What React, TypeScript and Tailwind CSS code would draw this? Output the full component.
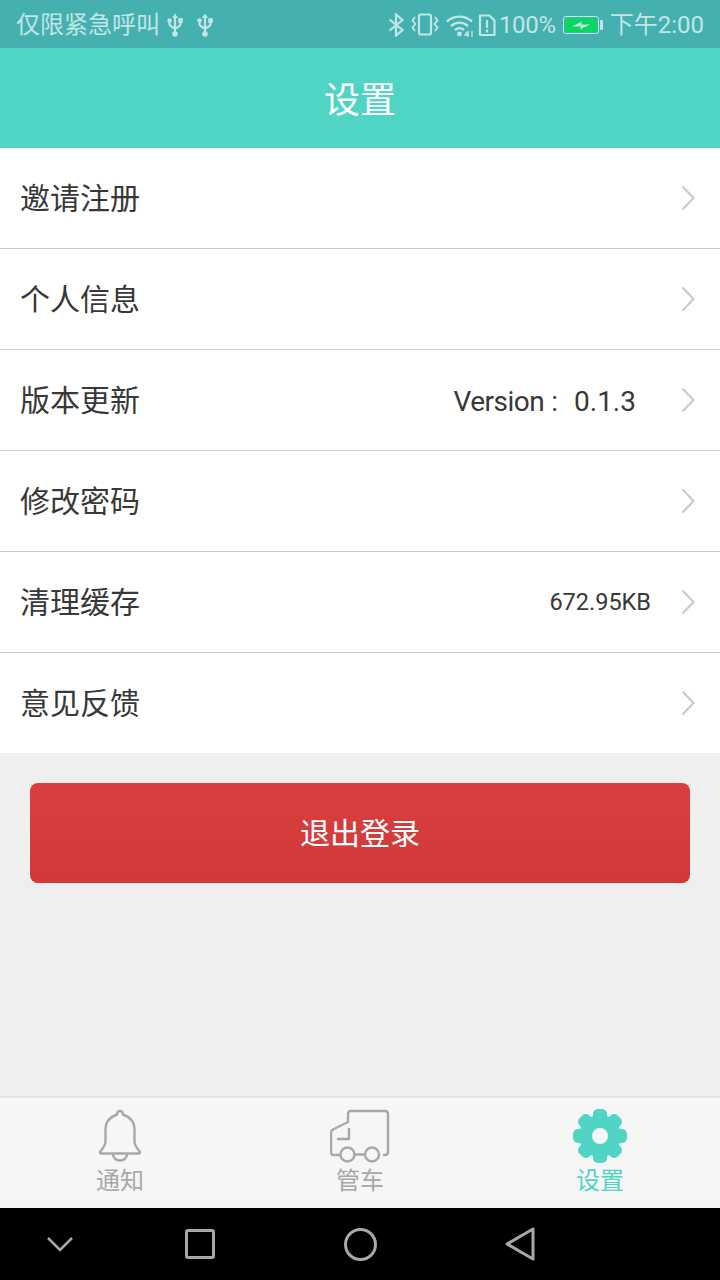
const FONT = "font-['Roboto','Noto_Sans_CJK_SC',sans-serif]";

const rows = [
  { label: "邀请注册" },
  { label: "个人信息" },
  { label: "版本更新", version: "0.1.3" },
  { label: "修改密码" },
  { label: "清理缓存", size: "672.95KB" },
  { label: "意见反馈" },
];

function UsbIcon() {
  return (
    <svg width="16" height="24" viewBox="0 0 16 24" fill="none" stroke="#c2e6e4" strokeWidth="2.200">
      <path d="M8 3v18M2.500 8v3c0 2 2 3 5.500 4.500 3.500-1.500 5.500-2.500 5.500-4.500V8" />
      <path d="M8 0.500l3 4.500H5z" fill="#c2e6e4" stroke="none" />
      <circle cx="2.500" cy="7.500" r="2.300" fill="#c2e6e4" stroke="none" />
      <rect x="11.200" y="5.200" width="4.600" height="4.600" fill="#c2e6e4" stroke="none" />
      <circle cx="8" cy="21" r="2.800" fill="#c2e6e4" stroke="none" />
    </svg>
  );
}

function StatusBar() {
  return (
    <div className="h-12 bg-[#45b0b0] flex items-center justify-between pl-4 pr-4 pt-[2px] text-[#c2e6e4] text-2xl">
      <div className="flex items-center">
        <span className="w-[143px] whitespace-nowrap">仅限紧急呼叫</span>
        <span className="ml-[8px] flex gap-[14px]">
          <UsbIcon />
          <UsbIcon />
        </span>
      </div>
      <div className="flex items-center">
        {/* bluetooth */}
        <svg width="16" height="24" viewBox="0 0 16 24" fill="none" stroke="#c2e6e4" strokeWidth="2.200" className="mr-[7px]">
          <path d="M1.500 6.500l13 10.500L8 22.500V1.500L14.500 7 1.500 17.500" />
        </svg>
        {/* vibrate */}
        <svg width="28" height="24" viewBox="0 0 28 24" fill="none" stroke="#c2e6e4" strokeWidth="2.200" className="mr-[7px]">
          <rect x="8" y="1.500" width="12" height="20" rx="2" />
          <path d="M4 4L1.500 7.500 4.500 11 1.500 14.500 4 18M24 4l2.500 3.500-3 3.500 3 3.500L24 18" strokeWidth="1.800" />
        </svg>
        {/* wifi */}
        <svg width="27" height="24" viewBox="0 0 27 24" fill="none" stroke="#c2e6e4" strokeWidth="2.400" className="mr-[5px]">
          <path d="M1 8.500c7-6.500 18-6.500 25 0M5 13c5-4.500 12-4.500 17 0M9 17c3-2.500 6-2.500 9 0" />
          <circle cx="13.500" cy="21" r="2.400" fill="#c2e6e4" stroke="none" />
          <path d="M21 19l-2 3h4M22 18v6M26 18v6" strokeWidth="1.400" />
        </svg>
        {/* sim alert */}
        <svg width="18" height="24" viewBox="0 0 18 24" fill="none" stroke="#c2e6e4" strokeWidth="2.200" className="mr-[3px]">
          <path d="M2 2.500h9.500l5 5v14.500H2z" strokeLinejoin="round" />
          <path d="M9 7v8M9 16.500v3" />
        </svg>
        <span className="text-[24px] tracking-[-0.3px] mr-[7px]">100%</span>
        {/* battery */}
        <svg width="40" height="22" viewBox="0 14 40 22" className="mr-[7px]">
          <rect x="0.500" y="16.500" width="35" height="17" rx="2" fill="none" stroke="#c2e6e4" />
          <rect x="2" y="18" width="32" height="14" fill="#0bd65f" />
          <path d="M9 26.500l10-5-1 3h9l-10 5 1-3z" fill="#c2e6e4" />
          <rect x="37" y="20" width="3" height="10" rx="1" fill="#c2e6e4" />
        </svg>
        <span className="whitespace-nowrap">下午2:00</span>
      </div>
    </div>
  );
}

function SettingRow({ label, version, size, last }: { label: string; version?: string; size?: string; last: boolean }) {
  return (
    <div className={`flex items-center pl-5 pr-[25px] bg-white ${last ? "h-[100px]" : "h-[101px] border-b border-[#c8c8c8]"}`}>
      <span className="text-[30px] text-[#383838] pt-[1px]">{label}</span>
      <div className="ml-auto flex items-center">
        {version && (
          <span className="flex text-[28px] text-[#383838] pt-1 mr-[45px]">
            <span className="tracking-[-0.5px]">Version</span>
            <span className="ml-[7px] mr-[16px]">:</span>
            <span>{version}</span>
          </span>
        )}
        {size && <span className="text-[23.5px] text-[#383838] pt-[2px] mr-[30px]">{size}</span>}
        <svg width="14" height="26" viewBox="0 0 14 26" fill="none" stroke="#c8c8c8" strokeWidth="2">
          <path d="M1.500 1.500L12.500 13 1.500 24.500" />
        </svg>
      </div>
    </div>
  );
}

function TabBar() {
  return (
    <div className="h-[112px] bg-[#f6f6f6] border-t-2 border-[#e3e3e3] flex">
      <div className="flex-1 flex flex-col items-center pt-[11px]">
        <svg width="44" height="54" viewBox="0 0 44 54" fill="none" stroke="#a8a8a8" strokeWidth="2.400" strokeLinejoin="round">
          <path d="M22 2c-2 0-3 1.500-3 3.500C12 8 7.500 13 7.500 20v13c0 3-2.500 6-5.500 10 0 1 .5 1.500 1.500 1.500h37c1 0 1.500-.5 1.500-1.500-3-4-5.500-7-5.500-10V20c0-7-4.500-12-11.500-14.500C25 3.500 24 2 22 2z" />
          <path d="M14.500 45c1 4 4 6.500 7.500 6.500s6.500-2.500 7.500-6.500" />
        </svg>
        <span className="text-2xl leading-[30px] text-[#a8a8a8] mt-[3px]">通知</span>
      </div>
      <div className="flex-1 flex flex-col items-center pt-[11px]">
        <svg width="60" height="54" viewBox="0 0 60 54" fill="none" stroke="#a8a8a8" strokeWidth="2.400" strokeLinejoin="round" strokeLinecap="round">
          <path d="M10 46H4c-2 0-3-1-3-3V24c0-2 .5-2.500 2-3.500L18 13V5c0-2 1-3 3-3h34c2 0 3 1 3 3v38c0 2-1 3-3 3h-1" />
          <path d="M8 30h11V20" />
          <circle cx="17.500" cy="45.500" r="7" />
          <circle cx="42" cy="45.500" r="7" />
          <path d="M24.500 45.500H35" />
        </svg>
        <span className="text-2xl leading-[30px] text-[#a8a8a8] mt-[3px]">管车</span>
      </div>
      <div className="flex-1 flex flex-col items-center pt-[11px]">
        <svg width="54" height="54" viewBox="-27 -27 54 54">
          <g fill="#50d4c4">
            <circle r="21" />
            {[0, 45, 90, 135, 180, 225, 270, 315].map((a) => (
              <rect key={a} x="-7" y="-27" width="14" height="14" rx="5" transform={`rotate(${a})`} />
            ))}
          </g>
          <circle r="8" fill="#f6f6f6" />
        </svg>
        <span className="text-2xl leading-[30px] text-[#50d4c4] mt-[3px]">设置</span>
      </div>
    </div>
  );
}

function NavBar() {
  return (
    <div className="h-[72px] bg-black flex items-center">
      <div className="w-[120px] flex justify-center">
        <svg width="28" height="18" viewBox="0 0 28 18" fill="none" stroke="#a8a8a8" strokeWidth="2.500">
          <path d="M2 3l12 12L26 3" />
        </svg>
      </div>
      <div className="w-[160px] flex justify-center">
        <div className="w-[30px] h-[30px] rounded-[3px] border-[3px] border-[#a8a8a8]" />
      </div>
      <div className="w-[160px] flex justify-center">
        <div className="w-[33px] h-[33px] rounded-full border-[3px] border-[#a8a8a8]" />
      </div>
      <div className="w-[160px] flex justify-center">
        <svg width="30" height="34" viewBox="0 0 30 34" fill="none" stroke="#a8a8a8" strokeWidth="3" strokeLinejoin="round">
          <path d="M2 17L28 2v30z" />
        </svg>
      </div>
    </div>
  );
}

export default function App() {
  return (
    <div className={`w-[720px] h-[1280px] flex flex-col bg-[#efefef] ${FONT}`}>
      <StatusBar />
      <div className="h-[100px] bg-[#50d4c4] flex items-center justify-center pt-[6px] text-white text-4xl">设置</div>
      <div className="flex flex-col">
        {rows.map((r, i) => (
          <SettingRow key={r.label} label={r.label} version={r.version} size={r.size} last={i === rows.length - 1} />
        ))}
      </div>
      <div className="flex-1 px-[30px] pt-[30px]">
        <div className="h-[100px] rounded-lg bg-gradient-to-b from-[#d93f3f] to-[#d13838] flex items-center justify-center text-white text-[30px]">
          退出登录
        </div>
      </div>
      <TabBar />
      <NavBar />
    </div>
  );
}
